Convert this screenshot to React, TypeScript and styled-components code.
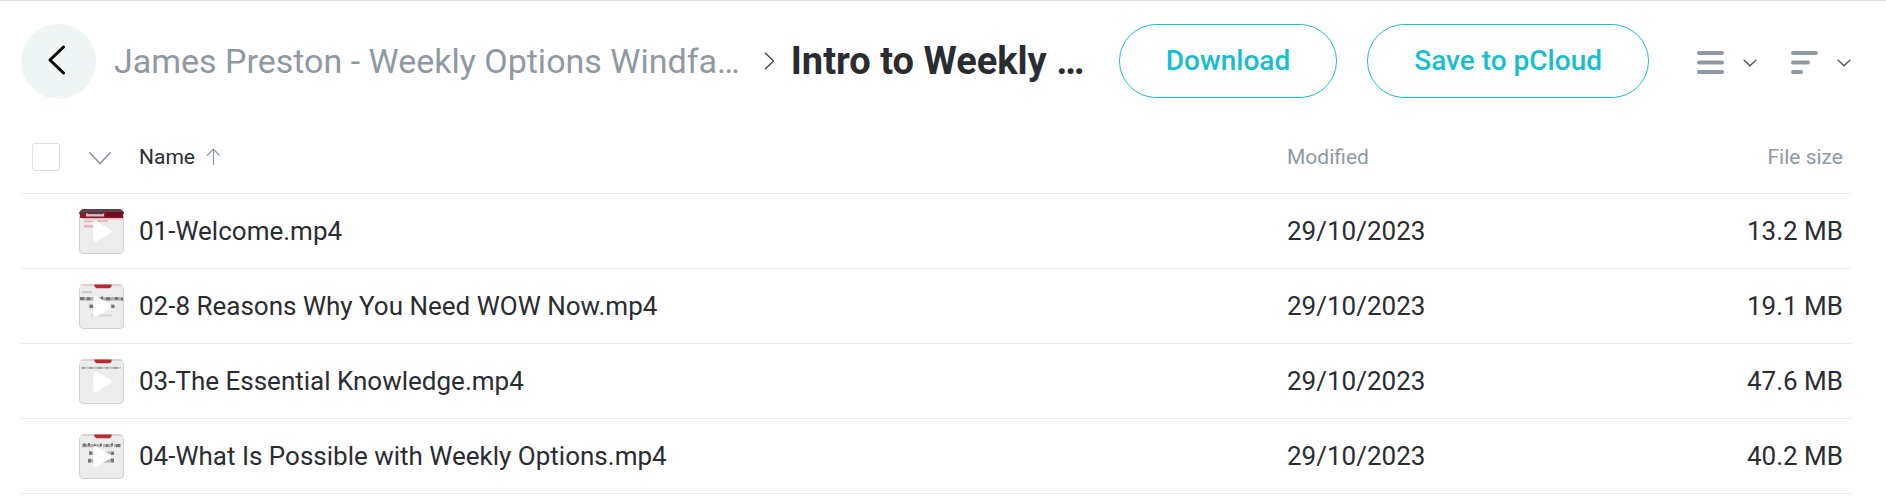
import React from "react";
import styled, { createGlobalStyle } from "styled-components";

const GlobalStyle = createGlobalStyle`
  *, *::before, *::after { box-sizing: border-box; }
  body {
    margin: 0;
    background: #fff;
    color: #292d31;
    font-family: Roboto, "Liberation Sans", sans-serif;
  }
  button { font: inherit; color: inherit; cursor: pointer; }
`;

const Page = styled.main`
  border-top: 1px solid #dfdfdf;
  padding: 23px 35px 0 21px;
`;

const TopBar = styled.header`
  display: flex;
  align-items: center;
  margin-bottom: 20px;
`;

const BackButton = styled.button`
  display: flex;
  align-items: center;
  justify-content: center;
  flex: none;
  width: 75px;
  height: 75px;
  padding: 0 4px 3px 0;
  border: 0;
  border-radius: 50%;
  background: #eff4f5;
`;

const Breadcrumbs = styled.nav`
  display: flex;
  align-items: center;
  flex: 1;
  min-width: 0;
  margin-left: 18px;
  padding-bottom: 2px;
  white-space: nowrap;
`;

const ParentLink = styled.a`
  color: #8f99a3;
  font-size: 34px;
  line-height: 44px;
  text-decoration: none;
`;

const CrumbArrow = styled.svg`
  flex: none;
  margin: 0 16px 0 24px;
`;

const CurrentFolder = styled.h1`
  margin: 0;
  font-size: 38px;
  font-weight: 700;
  line-height: 44px;
`;

const Actions = styled.div`
  display: flex;
  flex: none;
  align-items: center;
  align-self: flex-start;
  gap: 30px;
`;

const PillButton = styled.button`
  height: 74px;
  padding: 0 46px 2px;
  border: 1px solid #17bed0;
  border-radius: 37px;
  background: #fff;
  color: #17bed0;
  font-size: 28px;
  font-weight: 500;
  white-space: nowrap;
`;

const ViewControls = styled.div`
  display: flex;
  gap: 34px;
  margin-left: 18px;
  padding-top: 3px;
`;

const MenuButton = styled.button`
  display: flex;
  align-items: center;
  gap: 19px;
  padding: 0;
  border: 0;
  background: none;
`;

const FileTable = styled.table`
  width: 100%;
  border-collapse: separate;
  border-spacing: 0;
  table-layout: fixed;
`;

const Column = styled.col<{ $width?: number }>`
  width: ${(p) => (p.$width ? `${p.$width}px` : "auto")};
`;

const HeadCell = styled.th<{ $align?: "left" | "right"; $active?: boolean }>`
  height: 75px;
  padding: 2px ${(p) => (p.$align === "right" ? 8 : 0)}px 0 0;
  border-bottom: 1px solid #ebebeb;
  color: ${(p) => (p.$active ? "#292d31" : "#8f99a3")};
  font-size: 21px;
  font-weight: 400;
  line-height: 28px;
  text-align: ${(p) => p.$align ?? "left"};
  vertical-align: middle;
`;

const Cell = styled.td<{ $align?: "left" | "right" }>`
  height: 75px;
  padding: 0 ${(p) => (p.$align === "right" ? 8 : 0)}px 0 0;
  border-bottom: 1px solid #ebebeb;
  font-size: 26px;
  line-height: 32px;
  text-align: ${(p) => p.$align ?? "left"};
  vertical-align: middle;
  white-space: nowrap;
  overflow: hidden;
  text-overflow: ellipsis;
`;

const SelectAll = styled.input`
  display: block;
  appearance: none;
  width: 28px;
  height: 28px;
  margin: 0 0 0 11px;
  border: 1px solid #dfe0e1;
  border-radius: 3px;
  background: #fff;
  &:checked { background: #17bed0; }
`;

const SelectMenu = styled.button`
  display: flex;
  justify-content: center;
  width: 42px;
  margin-left: 10px;
  padding: 3px 0 0;
  border: 0;
  background: none;
`;

const SortButton = styled.button`
  display: flex;
  align-items: center;
  gap: 11px;
  padding: 0;
  border: 0;
  background: none;
`;

const ThumbFrame = styled.svg`
  display: block;
  margin-left: 10px;
`;

const FileLink = styled.a`
  color: inherit;
  text-decoration: none;
`;

const SmallChevron = () => (
  <svg width="14" height="8" viewBox="0 0 14 8" fill="none" stroke="#4a4e52" strokeWidth="1.2" aria-hidden="true">
    <path d="M.7 .8 7 6.8 13.3 .8" />
  </svg>
);

type Slide = "title" | "reasons" | "knowledge" | "possible";

const slideArt: Record<Slide, React.ReactNode> = {
  title: (
    <>
      <rect width="45" height="9" fill="#94142c" />
      <rect width="45" height="3.6" fill="#5d4249" />
      <rect x="27" y="3" width="18" height="5" fill="#740a20" />
      <rect x="7" y="4.5" width="18" height="3" fill="#cdbfc3" />
      <path d="M9 4.4h15" stroke="#4d3d42" strokeWidth="1.4" />
      <path d="M4 9.8h41" stroke="#e9b9c0" strokeWidth="1.4" />
      <path d="M5 12.4h9M18 12h11" stroke="#dcb0b7" strokeWidth="1.3" />
      <rect x="5" y="16" width="9" height="2.6" fill="#e6b3ba" />
    </>
  ),
  reasons: (
    <>
      <path d="M3 8.2h10" stroke="#c3cbd0" strokeWidth="2" />
      <path d="M0 14.8h45" stroke="#a9abae" strokeWidth="3.2" />
      <path d="M1 14.5h4M8 14.8h3M15 15h2M22 14h2M27 14.8h4M36 14.6h3M42 15h3" stroke="#707477" strokeWidth="3" />
      <path d="M10 22.4h26" stroke="#a9abae" strokeWidth="3.4" />
      <path d="M11 22.4h3M32 22.4h3" stroke="#707477" strokeWidth="3.4" />
      <path d="M12 31.4h21" stroke="#d2d4d6" strokeWidth="1.8" />
    </>
  ),
  knowledge: (
    <>
      <path d="M2 8.8h40" stroke="#c3c5c8" strokeWidth="2" />
      <path d="M3 8.8h3M10 8.8h4M18 8.8h5M27 8.8h2M34 8.8h5" stroke="#9c9fa3" strokeWidth="1.8" />
    </>
  ),
  possible: (
    <>
      <path d="M3 11.6h18M24 11.6h9M35 11.6h7" stroke="#b0b2b5" strokeWidth="3.2" />
      <path d="M4 11h3M9 10.5h2M15 12h2M21 11h2M27 11.6h2M32 10.8h2M37 11.4h4" stroke="#74787b" strokeWidth="3" />
      <path d="M10 19.2h25" stroke="#b0b2b5" strokeWidth="3.2" />
      <path d="M10 19.2h3M32 19.4h3" stroke="#74787b" strokeWidth="3.2" />
      <path d="M9 26.8h26" stroke="#b0b2b5" strokeWidth="3.4" />
      <path d="M9 26.6h3M15 27h2M32 26.4h3" stroke="#74787b" strokeWidth="3.6" />
    </>
  ),
};

const Thumbnail = ({ slide }: { slide: Slide }) => (
  <ThumbFrame width="45" height="45" viewBox="0 0 45 45" aria-hidden="true">
    <defs>
      <clipPath id={`clip-${slide}`}>
        <rect width="45" height="45" rx="5" />
      </clipPath>
      <filter id={`soft-${slide}`} x="-10%" y="-10%" width="120%" height="120%">
        <feGaussianBlur stdDeviation="0.7" />
      </filter>
    </defs>
    <g clipPath={`url(#clip-${slide})`}>
      <rect width="45" height="45" fill="#ececec" />
      <g filter={`url(#soft-${slide})`}>
        {slide !== "title" && (
          <>
            <path d="M0 1h45" stroke="#dcc6c5" strokeWidth="1.4" />
            <path d="M15.5 .4h17v2.4l-2 1.4h-13l-2-1.4z" fill="#b92c31" />
          </>
        )}
        {slideArt[slide]}
      </g>
    </g>
    <path d="M.5 5v35q0 4.5 4.5 4.5h35q4.5 0 4.5-4.5V5" fill="none" stroke="#d2d2d2" />
    <path d="M16.5 14.3v16.4L30.2 22.5z" fill="#fff" stroke="#fff" strokeWidth="4.4" strokeLinejoin="round" />
  </ThumbFrame>
);

const files: { name: string; modified: string; size: string; slide: Slide }[] = [
  { name: "01-Welcome.mp4", modified: "29/10/2023", size: "13.2 MB", slide: "title" },
  { name: "02-8 Reasons Why You Need WOW Now.mp4", modified: "29/10/2023", size: "19.1 MB", slide: "reasons" },
  { name: "03-The Essential Knowledge.mp4", modified: "29/10/2023", size: "47.6 MB", slide: "knowledge" },
  { name: "04-What Is Possible with Weekly Options.mp4", modified: "29/10/2023", size: "40.2 MB", slide: "possible" },
];

export default function App() {
  return (
    <>
      <GlobalStyle />
      <Page>
        <TopBar>
          <BackButton type="button" aria-label="Back">
            <svg width="18" height="30" viewBox="0 0 18 30" fill="none" stroke="#000" strokeWidth="3" strokeLinecap="round" strokeLinejoin="round" aria-hidden="true">
              <path d="M15.5 2 2 15 15.5 28" />
            </svg>
          </BackButton>
          <Breadcrumbs aria-label="Breadcrumb">
            <ParentLink href="#parent">James Preston - Weekly Options Windfa…</ParentLink>
            <CrumbArrow width="11" height="18" viewBox="0 0 11 18" fill="none" stroke="#3c4043" strokeWidth="1.3" aria-hidden="true">
              <path d="M1 .8 9.5 9 1 17.2" />
            </CrumbArrow>
            <CurrentFolder>Intro to Weekly …</CurrentFolder>
          </Breadcrumbs>
          <Actions>
            <PillButton type="button">Download</PillButton>
            <PillButton type="button">Save to pCloud</PillButton>
            <ViewControls>
              <MenuButton type="button" aria-label="View mode">
                <svg width="27" height="23" viewBox="0 0 27 23" stroke="#8f99a3" strokeWidth="4" strokeLinecap="round" aria-hidden="true">
                  <path d="M2 2h23M2 11.5h23M2 21h23" />
                </svg>
                <SmallChevron />
              </MenuButton>
              <MenuButton type="button" aria-label="Sort order">
                <svg width="27" height="23" viewBox="0 0 27 23" stroke="#8f99a3" strokeWidth="4" strokeLinecap="round" aria-hidden="true">
                  <path d="M2 2h23M2 11.5h15M2 21h8" />
                </svg>
                <SmallChevron />
              </MenuButton>
            </ViewControls>
          </Actions>
        </TopBar>
        <FileTable>
          <colgroup>
            <Column $width={48} />
            <Column $width={70} />
            <Column />
            <Column $width={364} />
            <Column $width={200} />
          </colgroup>
          <thead>
            <tr>
              <HeadCell>
                <SelectAll type="checkbox" aria-label="Select all files" />
              </HeadCell>
              <HeadCell>
                <SelectMenu type="button" aria-label="Selection options">
                  <svg width="22" height="13" viewBox="0 0 22 13" fill="none" stroke="#8f99a3" strokeWidth="1.8" strokeLinecap="round" aria-hidden="true">
                    <path d="M1 1 11 11.5 21 1" />
                  </svg>
                </SelectMenu>
              </HeadCell>
              <HeadCell $active aria-sort="ascending">
                <SortButton type="button">
                  Name
                  <svg width="14" height="18" viewBox="0 0 14 18" fill="none" stroke="#8f99a3" strokeWidth="1.2" aria-hidden="true">
                    <path d="M7.5 17V1M1 7.5 7.5 1 13.5 7.5" />
                  </svg>
                </SortButton>
              </HeadCell>
              <HeadCell>Modified</HeadCell>
              <HeadCell $align="right">File size</HeadCell>
            </tr>
          </thead>
          <tbody>
            {files.map((file) => (
              <tr key={file.name}>
                <Cell />
                <Cell>
                  <Thumbnail slide={file.slide} />
                </Cell>
                <Cell>
                  <FileLink href={`#${encodeURIComponent(file.name)}`}>{file.name}</FileLink>
                </Cell>
                <Cell>{file.modified}</Cell>
                <Cell $align="right">{file.size}</Cell>
              </tr>
            ))}
          </tbody>
        </FileTable>
      </Page>
    </>
  );
}
